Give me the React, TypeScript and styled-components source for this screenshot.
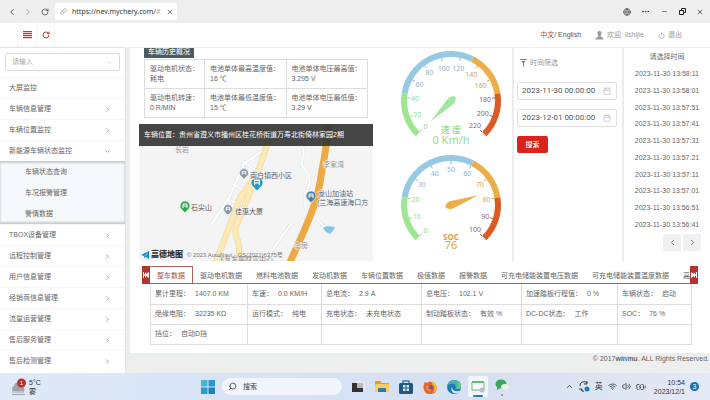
import React from "react";
import styled, { createGlobalStyle } from "styled-components";
import {
  BatteryCharging, Calendar, ChevronDown, ChevronLeft, ChevronRight, ChevronUp, Ellipsis,
  Globe, Link, Minus, Power, RotateCw, Search, Volume2, Wifi, X,
} from "lucide-react";

const Global = createGlobalStyle`
  *, *::before, *::after { box-sizing: border-box; }
  body { margin: 0; background: #fff; color: #666; font: 7px/10px "Liberation Sans", "Noto Sans CJK SC", sans-serif; }
  button, input { font: inherit; color: inherit; margin: 0; padding: 0; border: 0; background: none; }
  a { color: inherit; text-decoration: none; }
  svg { display: block; flex: none; }
  ul { margin: 0; padding: 0; list-style: none; }
`;

const Page = styled.div`
  display: flex;
  flex-direction: column;
  height: 100vh;
  overflow: hidden;
`;

const BrowserBar = styled.header`
  display: flex;
  align-items: center;
  flex: none;
  height: 23px;
  padding: 0 1px 0 7px;
  background: #eeeeee;
  color: #333;
`;
const BrowserTab = styled.div`
  display: flex;
  align-items: center;
  gap: 5px;
  width: 122px;
  height: 17px;
  margin-left: 6px;
  padding: 0 4px 0 5px;
  background: #fff;
  border-radius: 2px;
  font-family: "Noto Sans", sans-serif;
  color: #333;
`;
const Address = styled.span`
  flex: 1;
  white-space: nowrap;
  i { color: #aaa; font-style: normal; }
`;
const IconButton = styled.button<{ $w?: number; $color?: string }>`
  display: flex;
  align-items: center;
  justify-content: center;
  width: ${(p) => p.$w ?? 16}px;
  height: 16px;
  color: ${(p) => p.$color ?? "inherit"};
`;
const Spacer = styled.div`flex: 1;`;

const AppHeader = styled.header`
  display: flex;
  align-items: center;
  flex: none;
  height: 25px;
  padding: 0 28px 0 17px;
  background: #fff;
  border-bottom: 1px solid #efefef;
`;
const ToolCell = styled.button`
  display: flex;
  align-items: center;
  justify-content: center;
  width: 19px;
  height: 24px;
  border-left: 1px solid #f4f4f4;
  color: #c23a3a;
  &:last-of-type { border-right: 1px solid #f4f4f4; }
`;
const HeaderLink = styled.a<{ $dark?: boolean }>`
  display: flex;
  align-items: center;
  gap: 3px;
  margin-left: 14px;
  color: ${(p) => (p.$dark ? "#555" : "#999")};
  b { font-weight: 400; color: #b5483c; }
`;

const Body = styled.div`
  display: flex;
  flex: 1;
  min-height: 0;
  background: #edefee;
`;
const Sidebar = styled.nav`
  flex: none;
  width: 125px;
  background: #fff;
  overflow: hidden;
  box-shadow: 0 0 2px #ccc;
`;
const SideSearch = styled.label`
  display: flex;
  align-items: center;
  height: 18px;
  margin: 5px 5px 6px;
  padding: 0 6px;
  border: 1px solid #dcdcdc;
  border-radius: 2px;
  color: #bbb;
  input { flex: 1; min-width: 0; outline: 0; }
  input::placeholder { color: #aaa; opacity: 1; }
`;
const SideItem = styled.a`
  display: flex;
  align-items: center;
  justify-content: space-between;
  height: 21px;
  padding: 0 14px 0 9px;
  border-top: 1px solid #f5f5f5;
  color: #666;
`;
const SubMenu = styled.div`
  background: #f6f9fb;
  box-shadow: inset 0 2px 2px #c9cccc, inset 0 -2px 2px #c9cccc;
`;
const SubItem = styled.a`
  display: flex;
  align-items: center;
  height: 21px;
  padding-left: 25px;
`;

const Main = styled.main`
  display: flex;
  flex-direction: column;
  flex: 1;
  min-width: 0;
  margin-left: 5px;
`;
const Panel = styled.div`
  flex: 1;
  background: #fff;
  overflow: hidden;
`;
const Overview = styled.section`
  display: flex;
  height: 213px;
`;
const VehicleColumn = styled.div`
  display: flex;
  flex-direction: column;
  flex: 1;
  min-width: 0;
  margin-left: 9px;
`;
const SectionTitle = styled.h2`
  align-self: flex-start;
  height: 10px;
  margin: 0 0 1px 5px;
  padding: 0 4px;
  background: #4c5a63;
  color: #e8ecee;
  font-size: 7px;
  line-height: 7px;
  font-weight: 500;
`;
const HistoryTable = styled.table`
  margin: 0 5px 6px;
  border-collapse: collapse;
  table-layout: fixed;
  td {
    height: 29px;
    padding: 0 0 0 5px;
    border: 1px solid #ddd;
    white-space: nowrap;
    vertical-align: middle;
  }
  td:first-child { width: 60px; }
`;
const MapArea = styled.div`
  position: relative;
  flex: 1;
  min-height: 0;
  background: #f4f4f4;
  overflow: hidden;
  > svg { width: 100%; height: 100%; }
`;
const MapBar = styled.div`
  position: absolute;
  inset: 0 0 auto;
  height: 22px;
  padding-left: 5px;
  background: rgba(50, 50, 50, 0.9);
  color: #fff;
  line-height: 22px;
  white-space: nowrap;
`;
const MapCredit = styled.div`
  position: absolute;
  left: 2px;
  bottom: 0;
  display: flex;
  align-items: center;
  gap: 2px;
  height: 12px;
  font-size: 6px;
  white-space: nowrap;
  color: #777;
  b { margin-right: 2px; font-size: 8px; font-weight: 900; color: #333; }
`;
const GaugeColumn = styled.div`
  display: flex;
  flex-direction: column;
  align-items: center;
  flex: none;
  width: 141px;
  padding-left: 16px;
  border-right: 2px solid #ececec;
`;
const FilterColumn = styled.form`
  display: flex;
  flex-direction: column;
  flex: none;
  width: 110px;
  padding: 9px 5px 0 3px;
  border-right: 2px solid #ececec;
`;
const FilterTitle = styled.div`
  display: flex;
  align-items: center;
  gap: 3px;
  height: 12px;
  margin: 0 0 13px 3px;
  color: #999;
`;
const DateField = styled.label`
  display: flex;
  align-items: center;
  height: 18px;
  margin-bottom: 9px;
  padding: 0 5px 0 4px;
  border: 1px solid #dfdfdf;
  border-radius: 2px;
  color: #bbb;
  input {
    flex: 1;
    min-width: 0;
    color: #555;
    font-family: Roboto, sans-serif;
    font-size: 8px;
  }
`;
const SearchButton = styled.button`
  width: 31px;
  height: 17px;
  border-radius: 2px;
  background: #d9241e;
  color: #fff;
  font-weight: 500;
`;
const TimeColumn = styled.div`
  display: flex;
  flex-direction: column;
  flex: none;
  width: 86px;
  padding-top: 4px;
  text-align: center;
`;
const TimeList = styled.ul`
  display: grid;
  grid-auto-rows: 1fr;
  align-items: center;
  height: 167px;
  margin-top: 4px;
`;
const Pager = styled.div`
  display: flex;
  justify-content: flex-end;
  gap: 2px;
  margin: 1px 9px 0 0;
  button { width: 18px; height: 17px; background: #f0f0f0; color: #555; }
`;

const TabBar = styled.div`
  display: flex;
  height: 18px;
  margin: 5px 12px 0;
`;
const TabArrow = styled.button`
  display: flex;
  align-items: center;
  justify-content: center;
  flex: none;
  width: 8px;
  background: #b5332f;
  color: #fff;
`;
const Tabs = styled.div`
  display: flex;
  flex: 1;
  min-width: 0;
  overflow: hidden;
  border-bottom: 1px solid #b0605a;
`;
const Tab = styled.button<{ $active?: boolean }>`
  flex: none;
  height: 18px;
  padding: 0 7px;
  border: 1px solid ${(p) => (p.$active ? "#b0605a" : "transparent")};
  border-width: 1px ${(p) => (p.$active ? 1 : 0)}px 0 0;
  background: #fff;
  color: ${(p) => (p.$active ? "#a5524a" : "#666")};
`;
const DataTable = styled.table`
  width: calc(100% - 39px);
  margin: 0 20px;
  border-collapse: collapse;
  table-layout: fixed;
  td {
    height: 20px;
    padding: 0 0 0 4px;
    border: 1px solid #ddd;
    white-space: nowrap;
  }
  tr:first-child td { border-top: 0; }
  span { margin-left: 5px; }
`;
const Footer = styled.footer`
  flex: none;
  height: 20px;
  padding: 1px 1px 0;
  text-align: right;
  color: #666;
`;

const TaskBar = styled.footer`
  display: grid;
  grid-template-columns: 1fr auto 1fr;
  align-items: center;
  flex: none;
  height: 27px;
  padding: 0 11px;
  background: linear-gradient(90deg, #dfe9f8, #d5e2f6 45%, #d8e0f1 70%, #e3e9f6);
  color: #333;
`;
const Weather = styled.div`
  display: flex;
  gap: 2px;
  align-items: center;
  line-height: 9px;
`;
const Dock = styled.div`
  display: flex;
  align-items: center;
  gap: 4px;
`;
const DockButton = styled.button<{ $active?: boolean }>`
  display: flex;
  align-items: center;
  justify-content: center;
  width: 20px;
  height: 21px;
  border-radius: 2px;
  background: ${(p) => (p.$active ? "#f1f6fc" : "none")};
`;
const DockSearch = styled.label`
  display: flex;
  align-items: center;
  gap: 6px;
  width: 120px;
  height: 17px;
  margin-right: 2px;
  padding: 0 6px;
  border-radius: 9px;
  background: #f1f6fd;
  input { width: 80px; }
  input::placeholder { color: #444; opacity: 1; }
`;
const Tray = styled.div`
  display: flex;
  align-items: center;
  justify-content: flex-end;
  gap: 5px;
`;
const InputMode = styled.span`
  font-size: 8px;
`;
const Clock = styled.time`
  margin-left: 3px;
  text-align: right;
  line-height: 9px;
`;
const Count = styled.span`
  width: 9px;
  height: 9px;
  border-radius: 50%;
  background: #1672ae;
  color: #fff;
  text-align: center;
  line-height: 9px;
`;

const GREEN = "#9fe693";
const BLUE = "#95c9e4";
const ORANGE = "#edae49";
const RED = "#dc5a24";

const CX = 64;
const CY = 53;
function at(r: number, fraction: number) {
  const a = ((225 - fraction * 270) * Math.PI) / 180;
  return { x: CX + r * Math.cos(a), y: CY - r * Math.sin(a) };
}
function arc(from: number, to: number) {
  const s = at(47, from);
  const e = at(47, to);
  return `M${s.x} ${s.y}A47 47 0 0 1 ${e.x} ${e.y}`;
}
function bandColor(f: number) {
  if (f <= 0.2) return "#91d888";
  if (f < 0.63) return "#94b2ce";
  if (f <= 0.8) return "#dca453";
  return "#8d6760";
}

interface GaugeProps {
  max: number;
  step: number;
  value: number;
  title: string;
  reading: string;
  color: string;
  textColor: string;
  bold?: boolean;
}
function Gauge({ max, step, value, title, reading, color, textColor, bold }: GaugeProps) {
  const labels = Array.from({ length: max / step + 1 }, (_, i) => i * step);
  return (
    <svg width="128" height="104" viewBox="0 0 128 104" role="img" aria-label={`${title} ${reading}`}>
      <g fill="none" strokeWidth="6">
        <path d={arc(0, 0.2)} stroke={GREEN} />
        <path d={arc(0.2, 0.6)} stroke={BLUE} />
        <path d={arc(0.6, 0.8)} stroke={ORANGE} />
        <path d={arc(0.8, 1)} stroke={RED} />
      </g>
      {labels.map((n) => {
        const f = n / max;
        const a = at(44, f);
        const b = at(41, f);
        const t = at(n >= 100 ? 34 : 36, f);
        return (
          <g key={n}>
            <line x1={a.x} y1={a.y} x2={b.x} y2={b.y} stroke={bandColor(f)} />
            <text x={t.x} y={t.y + 3} fontSize="7" fontFamily="Noto Sans" textAnchor="middle" fill={bandColor(f)}>{n}</text>
          </g>
        );
      })}
      <g transform={`translate(${CX} ${CY}) rotate(${-(225 - (value / max) * 270)})`}>
        <path d="M29 0L0 4Q-5 3-6 0Q-5-3 0-4Z" fill={color} />
      </g>
      <g textAnchor="middle" fill={textColor} fontFamily="Noto Sans, Noto Sans CJK SC">
        <text x={CX} y={bold ? 88 : 85} fontSize={bold ? 8 : 9} fontWeight={bold ? 700 : 500}>{title}</text>
        <text x={CX} y={bold ? 97 : 96} fontSize="11">{reading}</text>
      </g>
    </svg>
  );
}

function Pin({ x, y, color, size = 1 }: { x: number; y: number; color: string; size?: number }) {
  return (
    <g transform={`translate(${x} ${y}) scale(${size})`}>
      <path d="M0 6C-2 3-5 2-5-1a5 5 0 0 1 10 0C5 2 2 3 0 6Z" fill={color} stroke="#fff" strokeWidth=".6" />
      <path d="M-2 1v-4h4v4M-2-1h4" stroke="#fff" fill="none" />
    </g>
  );
}

const LANES = "M126 25L105 40L90 74L72 101M103 37l15 10M94 60l21 12M87 75l18 6M159 16q9 12 4 20q-2 6 5 12q6 9-1 20q-3 6 0 17M153 99l-15 20l-9 15M174 88q4 10 13 15";
const STREETS = "M130 15L119 48L101 74L77 138M116 56L97 103Q95 110 99 117Q101 125 99 138";

function CityMap() {
  return (
    <MapArea>
      <svg viewBox="0 0 234 137" preserveAspectRatio="xMidYMid slice">
        <path d={LANES} fill="none" stroke="#dfe1e5" strokeWidth="3" />
        <path d={LANES} fill="none" stroke="#fff" strokeWidth="2" />
        <path d={STREETS} fill="none" stroke="#e9d49a" strokeWidth="6" />
        <path d={STREETS} fill="none" stroke="#fbe8b3" strokeWidth="5" />
        <path d="M189 0Q188 22 183 46Q180 70 172 90Q165 108 151 138" fill="none" stroke="#edaa43" strokeWidth="7" />
        <path d="M184 104l4-2l8 1l-2 4l-3 3l-4-2Z" fill="#83c7e8" />
        <Pin x={105} y={50} color="#8793a5" size={0.9} />
        <Pin x={118} y={60} color="#249bc8" size={1.2} />
        <Pin x={46} y={83} color="#31a84f" />
        <Pin x={89} y={86} color="#8793a5" size={0.9} />
        <Pin x={172} y={73} color="#4a7dab" />
        <g fill="#555" fontSize="7" stroke="#f4f4f4" strokeWidth="1" paintOrder="stroke">
          <text x="111" y="54" fill="#596579">南白镇西小区</text>
          <text x="52" y="86">石尖山</text>
          <text x="96" y="90">佳惠大厦</text>
          <text x="179" y="72" fill="#596579">龙山加油站</text>
          <text x="178" y="81" fill="#596579">(兰海高速海口方</text>
          <text x="36" y="28" fill="#999">长岩</text>
          <text x="184" y="43" fill="#999">李家湾</text>
          <text x="155" y="124" fill="#a68f7c">李房</text>
          <text x="78" y="138" fill="#888">飞龙发展财富中心</text>
        </g>
      </svg>
      <MapBar>车辆位置：贵州省遵义市播州区桂花桥街道万寿北街倚林家园2期</MapBar>
      <MapCredit>
        <svg width="8" height="8" viewBox="0 0 8 8"><path d="M0 4L8 0V8L5 6L3 7V5Z" fill="#1688c9" /><path d="M3 5L8 0L5 6Z" fill="#49b7e9" /></svg>
        <b>高德地图</b>© 2023 AutoNavi - GS(2021)6375号
      </MapCredit>
    </MapArea>
  );
}

const MENU_TOP = ["车辆信息管理", "车辆位置监控"];
const MENU_SUB = ["车辆状态查询", "车况报警管理", "警情数据"];
const MENU_REST = ["TBOX设备管理", "远程控制管理", "用户信息管理", "经销商信息管理", "流量运营管理", "售后服务管理", "售后检测管理"];
const HISTORY = [
  [["驱动电机状态：", "耗电"], ["电池单体最高温度值：", "16 ℃"], ["电池单体电压最高值：", "3.295 V"]],
  [["驱动电机转速：", "0 R/MIN"], ["电池单体最低温度值：", "15 ℃"], ["电池单体电压最低值：", "3.29 V"]],
];
const TIMES = ["13:58:11", "13:58:01", "13:57:51", "13:57:41", "13:57:31", "13:57:21", "13:57:11", "13:57:01", "13:56:51", "13:56:41"];
const TABS = ["整车数据", "驱动电机数据", "燃料电池数据", "发动机数据", "车辆位置数据", "极值数据", "报警数据", "可充电储能装置电压数据", "可充电储能装置温度数据", "高"];
const COLUMNS = [97, 74, 100, 100, 96, 74];
const DATA: string[][][] = [
  [["累计里程", "1407.0 KM"], ["车速", "0.0 KM/H"], ["总电流", "2.9 A"], ["总电压", "102.1 V"], ["加速踏板行程值", "0 %"], ["车辆状态", "启动"]],
  [["绝缘电阻", "32235 KΩ"], ["运行模式", "纯电"], ["充电状态", "未充电状态"], ["制动踏板状态", "有效 %"], ["DC-DC状态", "工作"], ["SOC", "76 %"]],
  [["挡位", "自动D挡"], [], [], [], [], []],
];

function SideMenu() {
  return (
    <Sidebar>
      <SideSearch><input aria-label="菜单" placeholder="请输入" /><ChevronDown size={7} /></SideSearch>
      <SideItem href="#">大屏监控</SideItem>
      {MENU_TOP.map((m) => <SideItem href="#" key={m}>{m}<ChevronRight size={7} /></SideItem>)}
      <SideItem href="#">新能源车辆状态监控<ChevronDown size={7} /></SideItem>
      <SubMenu>{MENU_SUB.map((m) => <SubItem href="#" key={m}>{m}</SubItem>)}</SubMenu>
      {MENU_REST.map((m) => <SideItem href="#" key={m}>{m}<ChevronRight size={7} /></SideItem>)}
    </Sidebar>
  );
}

function WindowsBar() {
  return (
    <TaskBar>
      <Weather>
        <svg width="16" height="18" viewBox="0 0 16 18">
          <path d="M2 13a3 3 0 0 1 1-5a4 4 0 0 1 8 1a2.500 2.500 0 0 1 2 4Z" fill="#a1a5aa" />
          <path d="M1 14h12M1 16.500h13" stroke="#999fa7" strokeWidth="1" />
          <circle cx="10.500" cy="5" r="4.500" fill="#b93228" />
          <text x="10.500" y="7" fontSize="6" fill="#fff" textAnchor="middle">1</text>
        </svg>
        <div>5°C<br />雾</div>
      </Weather>
      <Dock>
        <DockButton aria-label="开始">
          <svg width="14" height="14" viewBox="0 0 14 14" fill="#299ace"><path d="M0 0h6.500v6.500H0Z" fill="#45b4d8" /><path d="M7.500 0H14v6.500H7.500ZM0 7.500h6.500V14H0Z" /><path d="M7.500 7.500H14V14H7.500Z" fill="#1b83bd" /></svg>
        </DockButton>
        <DockSearch><Search size={9} transform="scale(-1 1)" /><input aria-label="搜索" placeholder="搜索" /></DockSearch>
        <DockButton aria-label="任务视图">
          <svg width="13" height="13" viewBox="0 0 13 13"><path d="M4 1h9v9H4Z" fill="#e8e8e8" /><path d="M0 3h5v5h6v4H0Z" fill="#333" /><path d="M5 3h6v5H5Z" fill="#bbb" /></svg>
        </DockButton>
        <DockButton aria-label="文件">
          <svg width="14" height="13" viewBox="0 0 14 13"><path d="M0 1h5l2 2h7v9H0Z" fill="#e59d25" /><path d="M1 4h13v8H0V5Z" fill="#f9cd63" /><path d="M3 12V9q0-1 1-1h6q1 0 1 1v3Z" fill="#287ca9" /></svg>
        </DockButton>
        <DockButton aria-label="商店">
          <svg width="14" height="14" viewBox="0 0 14 14"><path d="M4 4V1h6v3" stroke="#2d86b4" fill="none" strokeWidth="1.500" /><rect y="3" width="14" height="11" rx="1.500" fill="#205882" /><path d="M4 5h2.500v2.500H4ZM7.500 5H10v2.500H7.500ZM4 8.500h2.500V11H4ZM7.500 8.500H10V11H7.500Z" fill="#d9e6ef" /></svg>
        </DockButton>
        <DockButton aria-label="火狐">
          <svg width="14" height="14" viewBox="0 0 14 14"><path d="M2 2l2 1q3-3 6 0q4 2 4 5a6.500 6 0 0 1-13.500 0Q0 5 2 2Z" fill="#e9642c" /><path d="M9 1q5 3 5 7q-1 4-5 5q5-5 0-9Z" fill="#f6b63d" /><circle cx="7" cy="8" r="3" fill="#80517e" /><path d="M3 5l4 1l-2 2q1 2 4 1q-2 4-5 1Z" fill="#f08d35" /></svg>
        </DockButton>
        <DockButton aria-label="浏览器">
          <svg width="14" height="14" viewBox="0 0 14 14"><circle cx="7" cy="7" r="7" fill="#1f7bb6" /><path d="M0 6Q2 0 7 0q7 0 7 6q0 3-3 3H8q2-3-1-5Q3 3 0 6Z" fill="#3fb6b0" /><path d="M10 1q4 2 4 6q-1 2-4 2q2-4 0-8Z" fill="#6acb72" /><path d="M5 7q0 5 7 4l1 0Q10 14 7 13Q3 11 5 7Z" fill="#dceaf4" /></svg>
        </DockButton>
        <DockButton $active aria-label="远程">
          <svg width="14" height="20" viewBox="0 0 14 20"><path d="M1 13V5h12v8Z" fill="#fff" stroke="#59bd73" /><path d="M1 5h12" stroke="#59bd73" strokeWidth="2" /><circle cx="11" cy="13" r="2.500" fill="#b9c1c5" /><path d="M3 19h8" stroke="#2a78b8" strokeWidth="2" strokeLinecap="round" /></svg>
        </DockButton>
        <DockButton aria-label="微信">
          <svg width="14" height="18" viewBox="0 0 14 18"><ellipse cx="6" cy="6" rx="5.500" ry="4.500" fill="#35a85b" /><path d="M2 9v3l3-2Z" fill="#35a85b" /><ellipse cx="10" cy="9" rx="4" ry="3" fill="#e8f2eb" /><circle cx="7" cy="17" r="1" fill="#888" /></svg>
        </DockButton>
      </Dock>
      <Tray>
        <ChevronUp size={9} />
        <svg width="11" height="11" viewBox="0 0 11 11"><path d="M1 5a4 4 0 0 1 7-3M8 0v3H5M2 9q2 2 3 1M0 8h3v2" fill="none" stroke="#333" /><circle cx="8" cy="8" r="2.500" fill="#1f7bb6" /></svg>
        <InputMode>英</InputMode>
        <Wifi size={9} />
        <Volume2 size={9} />
        <BatteryCharging size={10} />
        <Clock>10:54<br />2023/12/1</Clock>
        <Count>3</Count>
      </Tray>
    </TaskBar>
  );
}

export default function App() {
  return (
    <Page>
      <Global />
      <BrowserBar>
        <IconButton $w={9} aria-label="后退"><ChevronLeft size={10} /></IconButton>
        <IconButton $w={24} $color="#999" aria-label="前进"><ChevronRight size={10} /></IconButton>
        <IconButton $w={9} aria-label="刷新"><RotateCw size={8} /></IconButton>
        <BrowserTab>
          <Link size={7} color="#888" />
          <Address>https://nev.mychery.com/<i>#</i></Address>
          <X size={8} />
        </BrowserTab>
        <Spacer />
        <IconButton $w={18} aria-label="语言"><Globe size={8} /></IconButton>
        <IconButton $w={19} aria-label="更多"><Ellipsis size={9} /></IconButton>
        <IconButton $w={18} aria-label="最小化"><Minus size={7} /></IconButton>
        <IconButton $w={18} aria-label="还原">
          <svg width="7" height="7" viewBox="0 0 7 7" fill="none" stroke="#222"><path d="M.5 2.500h4v4h-4ZM2.500 2V.5h4v4H5" /></svg>
        </IconButton>
        <IconButton $w={18} aria-label="关闭"><X size={8} color="#222" /></IconButton>
      </BrowserBar>

      <AppHeader>
        <ToolCell aria-label="菜单">
          <svg width="9" height="8" viewBox="0 0 9 8" fill="#c23a3a"><path d="M0 0h9v1.300H0ZM0 2h9v1.300H0ZM0 4h9v1.300H0ZM0 6h9v1.300H0Z" /></svg>
        </ToolCell>
        <ToolCell aria-label="重新载入"><RotateCw size={8} strokeWidth={3} /></ToolCell>
        <Spacer />
        <HeaderLink href="#" $dark><span><b>中文</b>/ English</span></HeaderLink>
        <HeaderLink href="#">
          <svg width="9" height="9" viewBox="0 0 9 9" fill="#999"><path d="M4.500 0a2 2 0 0 1 2 2.300Q6 5 5.500 5.300L8 7l.5 1.500H.5L1 7l2.500-1.700Q3 5 2.500 2.300A2 2 0 0 1 4.500 0Z" /></svg>
          欢迎: lishijie
        </HeaderLink>
        <HeaderLink href="#"><Power size={7} />退出</HeaderLink>
      </AppHeader>

      <Body>
        <SideMenu />
        <Main>
          <Panel>
            <Overview>
              <VehicleColumn>
                <SectionTitle>车辆历史概况</SectionTitle>
                <HistoryTable>
                  <tbody>
                    {HISTORY.map((row, i) => (
                      <tr key={i}>{row.map(([k, v]) => <td key={k}>{k}<br />{v}</td>)}</tr>
                    ))}
                  </tbody>
                </HistoryTable>
                <CityMap />
              </VehicleColumn>
              <GaugeColumn>
                <Gauge max={220} step={20} value={0} title="速 度" reading="0 Km/h" color="#a0e69b" textColor="#97dc8c" />
                <Gauge max={100} step={10} value={76} title="SOC" reading="76" color={ORANGE} textColor="#e0a040" bold />
              </GaugeColumn>
              <FilterColumn>
                <FilterTitle>
                  <svg width="7" height="8" viewBox="0 0 7 8" fill="#888"><path d="M0 0h7v1H0ZM1 2h5L4 4v4L3 7V4Z" /></svg>
                  时间筛选
                </FilterTitle>
                <DateField><input aria-label="开始时间" defaultValue="2023-11-30 00:00:00" /><Calendar size={8} /></DateField>
                <DateField><input aria-label="结束时间" defaultValue="2023-12-01 00:00:00" /><Calendar size={8} /></DateField>
                <SearchButton type="button">搜索</SearchButton>
              </FilterColumn>
              <TimeColumn>
                <div>请选择时间</div>
                <TimeList>{TIMES.map((t) => <li key={t}>2023-11-30 {t}</li>)}</TimeList>
                <Pager>
                  <IconButton aria-label="上一页"><ChevronLeft size={9} /></IconButton>
                  <IconButton aria-label="下一页"><ChevronRight size={9} /></IconButton>
                </Pager>
              </TimeColumn>
            </Overview>

            <TabBar>
              <TabArrow aria-label="向左">
                <svg width="6" height="6" viewBox="0 0 6 6" fill="#fff"><path d="M0 0h1v6H0ZM1 3L3 0v2L6 0v6L3 4v2Z" /></svg>
              </TabArrow>
              <Tabs role="tablist">
                {TABS.map((t, i) => <Tab key={t} role="tab" aria-selected={i === 0} $active={i === 0}>{t}</Tab>)}
              </Tabs>
              <TabArrow aria-label="向右">
                <svg width="6" height="6" viewBox="0 0 6 6" fill="#fff"><path d="M5 0h1v6H5ZM5 3L3 0v2L0 0v6L3 4v2Z" /></svg>
              </TabArrow>
            </TabBar>
            <DataTable>
              <colgroup>{COLUMNS.map((w, i) => <col key={i} width={w} />)}</colgroup>
              <tbody>
                {DATA.map((row, i) => (
                  <tr key={i}>{row.map(([k, v], j) => <td key={j}>{k && <>{k}：<span>{v}</span></>}</td>)}</tr>
                ))}
              </tbody>
            </DataTable>
          </Panel>
          <Footer>© 2017<b>winmu</b>. ALL Rights Reserved.</Footer>
        </Main>
      </Body>
      <WindowsBar />
    </Page>
  );
}
